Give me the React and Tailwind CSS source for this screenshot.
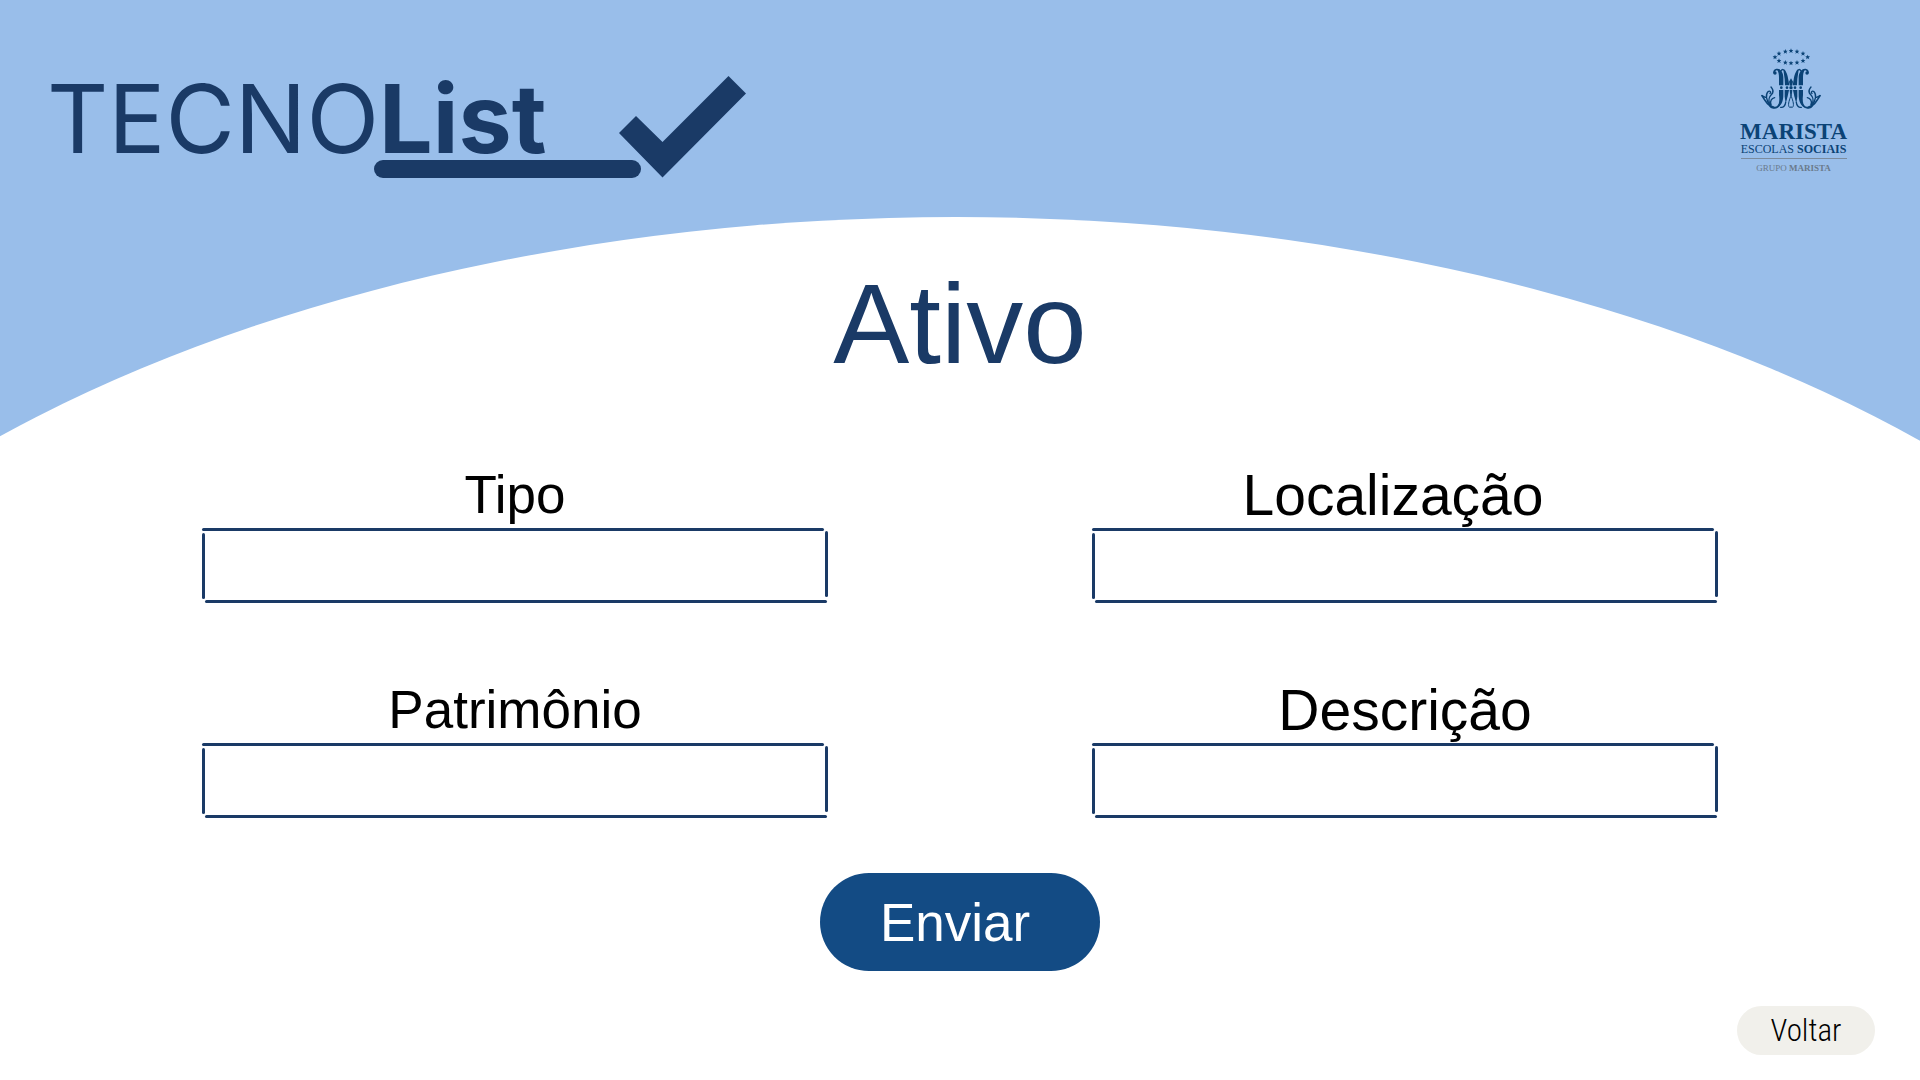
const stars = [
  [107, 23], [90, 25], [125, 25], [71, 31], [143, 31], [59, 42],
  [157, 42], [71, 53], [143, 53], [90, 58], [125, 58], [107, 60],
];

function EmblemHalf() {
  return (
    <g strokeLinecap="round" strokeLinejoin="round">
      <circle cx="59" cy="90" r="5" fill="currentColor" stroke="none" />
      <path strokeWidth="5" d="M56 89C56 78 70 76 75 86" />
      <path fill="currentColor" stroke="none" d="M64 78C75 77 84 88 84 104V127H71V104C71 95 70 86 64 78Z" />
      <path fill="currentColor" stroke="none" d="M71 141H84V156C84 173 79 188 65 194C72 182 73 170 71 156Z" />
      <path strokeWidth="5" d="M72 185C66 197 48 198 43 187" />
      <circle cx="45" cy="185" r="4" fill="currentColor" stroke="none" />
      <path strokeWidth="4" d="M77 84C80 78 86 78 89 85" />
      <path fill="currentColor" stroke="none" d="M84 80C93 82 97 96 99 110L102 127H89L88 108Z" />
      <path fill="currentColor" stroke="none" d="M88 141H101L97 160L91 182L88 160Z" />
      <path strokeWidth="4" d="M91 178C90 188 84 195 76 193" />
      <path strokeWidth="3" d="M107 158C103 168 97 184 101 191C103 195 106 194 107 192" />
      <circle cx="78" cy="134" r="4" fill="currentColor" stroke="none" />
      <circle cx="95" cy="134" r="4" fill="currentColor" stroke="none" />
      <path strokeWidth="5" d="M56 193C40 190 32 178 20 158" />
      <path strokeWidth="4" d="M20 158L30 163M44 186C32 172 30 154 38 146C44 142 49 148 44 151" />
      <path strokeWidth="4" d="M42 180C37 162 46 158 52 150C56 142 50 136 47 132" />
      <path strokeWidth="4" d="M46 184C44 170 50 166 58 164" />
    </g>
  );
}

function MaristaLogo() {
  return (
    <div className="flex flex-col items-center whitespace-nowrap font-['Liberation_Serif','Times_New_Roman',serif] text-[#0b4376]">
      <svg viewBox="11 3 210 210" className="size-[70px]" fill="none" stroke="currentColor" aria-hidden="true">
        {stars.map(([x, y]) => (
          <polygon
            key={`${x}-${y}`}
            fill="currentColor"
            stroke="none"
            points="0,-7 2,-2 7,-2 3,2 5,7 0,4 -5,7 -3,2 -7,-2 -2,-2"
            transform={`translate(${x} ${y})`}
          />
        ))}
        <EmblemHalf />
        <g transform="matrix(-1 0 0 1 214 0)">
          <EmblemHalf />
        </g>
        <circle cx="107" cy="134" r="5" fill="currentColor" stroke="none" />
        <path fill="currentColor" stroke="none" d="M101 116L107 106L113 116L110 128H104ZM103 141H111L109 158H105Z" />
      </svg>
      <p className="mt-1.5 text-[23px] leading-6 font-bold">MARISTA</p>
      <p className="text-xs leading-[11px]">
        ESCOLAS <b>SOCIAIS</b>
      </p>
      <hr className="mt-[3px] w-[106px] border-t border-[#7b8b9e]" />
      <p className="mt-[3px] text-[9px] leading-3 text-[#6a7a8c]">
        GRUPO <b>MARISTA</b>
      </p>
    </div>
  );
}

function BrandLogo() {
  return (
    <div className="flex items-start pt-8 text-[#1a3a66]">
      <div className="flex flex-col">
        <p className="font-['Inter',sans-serif] text-[95px] leading-[86px] whitespace-nowrap">
          TECNO<b>List</b>
        </p>
        <div className="-mt-0.5 ml-[327px] h-[18px] w-[267px] rounded-full bg-[#1a3a66]" />
      </div>
      <svg viewBox="0 0 128 102" className="-ml-[22px] h-[102px] w-32" fill="currentColor" aria-hidden="true">
        <path d="M0 57L17 40L43.500 66L109.500 0L127 17.500L43.500 101.500Z" />
      </svg>
    </div>
  );
}

function Field({ id, label, className }) {
  return (
    <div className="flex flex-col">
      <label htmlFor={id} className={`text-center leading-[66px] whitespace-nowrap text-black ${className}`}>
        {label}
      </label>
      <div className="relative h-[75px]">
        <input id={id} name={id} type="text" className="size-full bg-transparent px-4 text-3xl outline-none" />
        <span className="pointer-events-none absolute top-0 right-1 left-0 h-[3px] rounded-full bg-[#1a3a66]" />
        <span className="pointer-events-none absolute top-[5px] bottom-1 left-0 w-[3px] rounded-full bg-[#1a3a66]" />
        <span className="pointer-events-none absolute top-[3px] right-0 bottom-1.5 w-[3px] rounded-full bg-[#1a3a66]" />
        <span className="pointer-events-none absolute right-px bottom-0 left-[3px] h-[3px] rounded-full bg-[#1a3a66]" />
      </div>
    </div>
  );
}

export default function App() {
  return (
    <div className="relative isolate flex min-h-screen flex-col bg-white font-['Liberation_Sans',Arial,sans-serif]">
      <svg
        viewBox="0 0 1920 442"
        preserveAspectRatio="none"
        className="absolute inset-x-0 top-0 -z-10 h-[442px] w-full"
        aria-hidden="true"
      >
        <path fill="#99beea" d="M0 0H1920V442H0Z" />
        <ellipse fill="#fff" cx="956" cy="987" rx="1368" ry="770" />
      </svg>

      <header className="flex h-65 items-start justify-between pt-11 pr-[73px] pl-[47px]">
        <BrandLogo />
        <MaristaLogo />
      </header>

      <main className="flex flex-col">
        <h1 className="text-center text-[114px] leading-[128px] text-[#1a3a66]">Ativo</h1>
        <form className="mt-[74px] flex flex-col items-center" onSubmit={(e) => e.preventDefault()}>
          <div className="grid w-full grid-cols-2 gap-x-[264px] gap-y-[74px] px-[202px]">
            <Field id="tipo" label="Tipo" className="text-[53px]" />
            <Field id="localizacao" label="Localização" className="pr-6 text-[57px]" />
            <Field id="patrimonio" label="Patrimônio" className="text-[53px]" />
            <Field id="descricao" label="Descrição" className="text-[57px]" />
          </div>
          <button
            type="submit"
            className="mt-[55px] h-[98px] w-[280px] rounded-full bg-[#134b84] pr-2.5 text-[53px] leading-none text-white"
          >
            Enviar
          </button>
        </form>
      </main>

      <footer className="mt-auto flex justify-end pr-[45px] pb-[25px]">
        <button
          type="button"
          className="h-[49px] w-[138px] rounded-full bg-[#f1f0eb] font-['Roboto_Condensed',Roboto,sans-serif] text-[31px] leading-none font-light text-black"
        >
          Voltar
        </button>
      </footer>
    </div>
  );
}
